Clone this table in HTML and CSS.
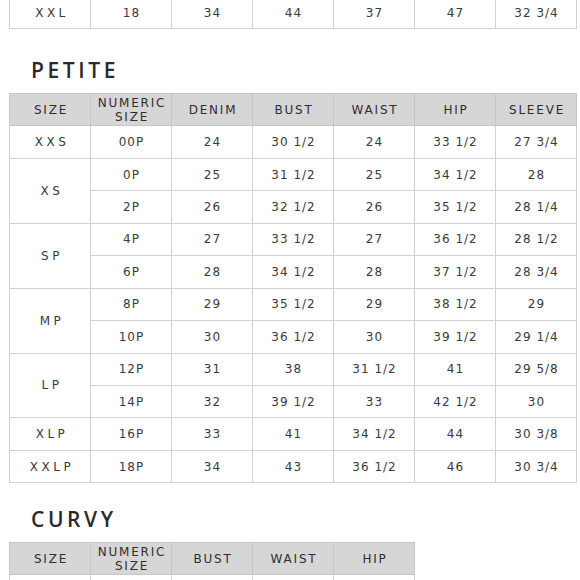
FILE: index.html
```html
<!DOCTYPE html>
<html>
<head>
<meta charset="utf-8">
<link rel="stylesheet" href="styles.css">
</head>
<body>
<div class="page">
  <table class="chart chart-top">
    <tbody>
      <tr><td class="size">XXL</td><td>18</td><td>34</td><td>44</td><td>37</td><td>47</td><td>32 3/4</td></tr>
    </tbody>
  </table>

  <h2 class="title title-petite">PETITE</h2>
  <table class="chart">
    <thead>
      <tr><th>SIZE</th><th class="two">NUMERIC<br>SIZE</th><th>DENIM</th><th>BUST</th><th>WAIST</th><th>HIP</th><th>SLEEVE</th></tr>
    </thead>
    <tbody>
      <tr><td class="size">XXS</td><td>00P</td><td>24</td><td>30 1/2</td><td>24</td><td>33 1/2</td><td>27 3/4</td></tr>
      <tr><td class="size" rowspan="2">XS</td><td>0P</td><td>25</td><td>31 1/2</td><td>25</td><td>34 1/2</td><td>28</td></tr>
      <tr><td>2P</td><td>26</td><td>32 1/2</td><td>26</td><td>35 1/2</td><td>28 1/4</td></tr>
      <tr><td class="size" rowspan="2">SP</td><td>4P</td><td>27</td><td>33 1/2</td><td>27</td><td>36 1/2</td><td>28 1/2</td></tr>
      <tr><td>6P</td><td>28</td><td>34 1/2</td><td>28</td><td>37 1/2</td><td>28 3/4</td></tr>
      <tr><td class="size" rowspan="2">MP</td><td>8P</td><td>29</td><td>35 1/2</td><td>29</td><td>38 1/2</td><td>29</td></tr>
      <tr><td>10P</td><td>30</td><td>36 1/2</td><td>30</td><td>39 1/2</td><td>29 1/4</td></tr>
      <tr><td class="size" rowspan="2">LP</td><td>12P</td><td>31</td><td>38</td><td>31 1/2</td><td>41</td><td>29 5/8</td></tr>
      <tr><td>14P</td><td>32</td><td>39 1/2</td><td>33</td><td>42 1/2</td><td>30</td></tr>
      <tr><td class="size">XLP</td><td>16P</td><td>33</td><td>41</td><td>34 1/2</td><td>44</td><td>30 3/8</td></tr>
      <tr><td class="size">XXLP</td><td>18P</td><td>34</td><td>43</td><td>36 1/2</td><td>46</td><td>30 3/4</td></tr>
    </tbody>
  </table>

  <h2 class="title title-curvy">CURVY</h2>
  <table class="chart chart-curvy">
    <thead>
      <tr><th>SIZE</th><th class="two">NUMERIC<br>SIZE</th><th>BUST</th><th>WAIST</th><th>HIP</th></tr>
    </thead>
    <tbody>
      <tr class="below"><td class="size">XL</td><td>14W</td><td>42</td><td>36</td><td>45</td></tr>
    </tbody>
  </table>
</div>
</body>
</html>
```
FILE: styles.css
```css
html, body {
  margin: 0;
  padding: 0;
  background: #ffffff;
}
body {
  font-family: "DejaVu Sans", "Liberation Sans", sans-serif;
  color: #333333;
  overflow: hidden;
}
.page {
  padding: 0 0 0 9px;
}
.chart {
  border-collapse: collapse;
  table-layout: fixed;
  width: 568px;
  background: #ffffff;
}
.chart-top {
  margin-top: -4px;
}
.chart-curvy {
  width: 406px;
}
.chart th,
.chart td {
  border: 1px solid #d0d0d0;
  text-align: center;
  vertical-align: middle;
  padding: 0;
  font-weight: normal;
  white-space: nowrap;
}
.chart tr {
  height: 32.45px;
}
.chart thead tr {
  height: 32px;
}
.chart th {
  background: #d6d6d6;
  border-color: #c6c6c6;
  font-size: 12px;
  letter-spacing: 1.8px;
  color: #2e2e2e;
  padding-left: 2px;
}
.chart th.two {
  line-height: 14px;
  font-size: 12px;
  padding-top: 1px;
}
.chart td {
  font-size: 12px;
  letter-spacing: 1px;
  padding-left: 1px;
  color: #3a3a3a;
}
.chart td.size {
  letter-spacing: 3.5px;
  padding-left: 4px;
}
.chart tr.below td {
  vertical-align: bottom;
  padding-bottom: 6px;
}
.title {
  margin: 0;
  font-family: "Open Sans", "DejaVu Sans", sans-serif;
  font-weight: 600;
  font-size: 21px;
  line-height: 21px;
  letter-spacing: 3.6px;
  color: #2a2a2a;
  padding-left: 22px;
}
.title-petite {
  margin-top: 31px;
  margin-bottom: 12px;
}
.title-curvy {
  margin-top: 26px;
  margin-bottom: 12px;
}
```
